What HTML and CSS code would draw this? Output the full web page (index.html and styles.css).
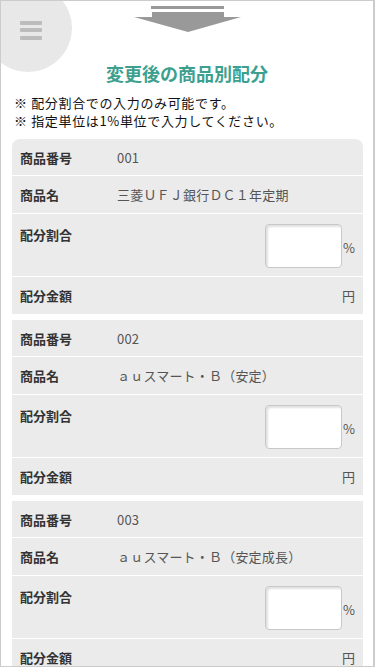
FILE: index.html
```html
<!DOCTYPE html>
<html lang="ja">
<head>
<meta charset="utf-8">
<meta name="viewport" content="width=device-width, initial-scale=1">
<title>変更後の商品別配分</title>
<link rel="stylesheet" href="styles.css">
</head>
<body>
<div class="page">
  <button class="menu" type="button" aria-label="メニュー">
    <span class="bar"></span><span class="bar"></span><span class="bar"></span>
  </button>
  <div class="arrow">
    <svg width="107" height="26" viewBox="0 0 107 26">
      <rect x="17" y="0" width="73" height="3" fill="#999"/>
      <rect x="18" y="6" width="72" height="6" fill="#999"/>
      <polygon points="0,11 107,11 54,26" fill="#999"/>
    </svg>
  </div>
  <h1 class="title">変更後の商品別配分</h1>
  <div class="notes">
    <p>※ 配分割合での入力のみ可能です。</p>
    <p>※ 指定単位は1%単位で入力してください。</p>
  </div>

  <div class="card first">
    <div class="row"><div class="label">商品番号</div><div class="value">001</div></div>
    <div class="row"><div class="label">商品名</div><div class="value">三菱ＵＦＪ銀行ＤＣ１年定期</div></div>
    <div class="row rate"><div class="label">配分割合</div><div class="input-wrap"><input class="box" type="text"><span class="unit">%</span></div></div>
    <div class="row"><div class="label">配分金額</div><div class="yen">円</div></div>
  </div>

  <div class="card">
    <div class="row"><div class="label">商品番号</div><div class="value">002</div></div>
    <div class="row"><div class="label">商品名</div><div class="value">ａｕスマート・Ｂ（安定）</div></div>
    <div class="row rate"><div class="label">配分割合</div><div class="input-wrap"><input class="box" type="text"><span class="unit">%</span></div></div>
    <div class="row"><div class="label">配分金額</div><div class="yen">円</div></div>
  </div>

  <div class="card">
    <div class="row"><div class="label">商品番号</div><div class="value">003</div></div>
    <div class="row"><div class="label">商品名</div><div class="value">ａｕスマート・Ｂ（安定成長）</div></div>
    <div class="row rate"><div class="label">配分割合</div><div class="input-wrap"><input class="box" type="text"><span class="unit">%</span></div></div>
    <div class="row"><div class="label">配分金額</div><div class="yen">円</div></div>
  </div>
</div>
</body>
</html>
```
FILE: styles.css
```css
html, body {
  margin: 0;
  padding: 0;
  background: #fff;
}
body {
  font-family: "Noto Sans CJK JP", "Noto Sans", "Liberation Sans", sans-serif;
  font-size: 13px;
  color: #222;
}
.page {
  position: relative;
  box-sizing: border-box;
  width: 375px;
  height: 667px;
  overflow: hidden;
  border: 1px solid #ccc;
  border-right-width: 2px;
  padding-top: 5px;
}
.menu {
  position: absolute;
  left: -17px;
  top: -17px;
  width: 88px;
  height: 88px;
  border: 0;
  border-radius: 50%;
  background: #e8e8e8;
  padding: 0;
  display: flex;
  flex-direction: column;
  align-items: center;
  justify-content: center;
  gap: 3.5px;
  padding-left: 5px;
  padding-top: 4px;
  box-sizing: border-box;
}
.menu .bar {
  display: block;
  width: 22px;
  height: 4px;
  border-radius: 1px;
  background: #bcbcbc;
}
.arrow {
  display: flex;
  justify-content: center;
  height: 26px;
}
.arrow svg {
  display: block;
}
.title {
  margin: 29px 0 0;
  text-align: center;
  font-size: 18px;
  line-height: 24px;
  font-weight: bold;
  color: #3d9f8e;
}
.notes {
  margin: 9px 0 0;
  padding-left: 13px;
}
.notes p {
  margin: 0;
  font-size: 13px;
  line-height: 18px;
  letter-spacing: 0.65px;
  color: #111;
}
.card {
  margin: 6px 10px 0 11px;
  background: #ebebeb;
}
.card.first {
  margin-top: 9px;
  border-radius: 8px 8px 0 0;
}
.row {
  display: flex;
  align-items: flex-start;
  padding: 10px 8px 10px 8px;
  line-height: 17px;
  border-top: 1px solid #fff;
}
.row:first-child {
  border-top: 0;
  padding-bottom: 9px;
}
.label {
  width: 97px;
  flex: none;
  font-weight: bold;
  color: #333;
  font-size: 13px;
}
.value {
  color: #555;
  font-size: 13px;
  letter-spacing: 0.2px;
}
.rate {
  padding-top: 10px;
  padding-bottom: 8px;
}
.rate .label {
  padding-top: 2px;
}
.input-wrap {
  margin-left: auto;
  display: flex;
  align-items: center;
}
.box {
  box-sizing: border-box;
  width: 77px;
  height: 44px;
  margin: 0 1px 0 0;
  border: 1px solid #c8c8c8;
  border-radius: 4px;
  background: #fff;
  box-shadow: inset 2px 2px 2px rgba(0, 0, 0, 0.12);
  font: inherit;
  padding: 0 4px;
}
.unit {
  color: #555;
  font-size: 13px;
  width: 12px;
  padding-top: 2px;
}
.yen {
  margin-left: auto;
  color: #555;
  font-size: 13px;
}
```
